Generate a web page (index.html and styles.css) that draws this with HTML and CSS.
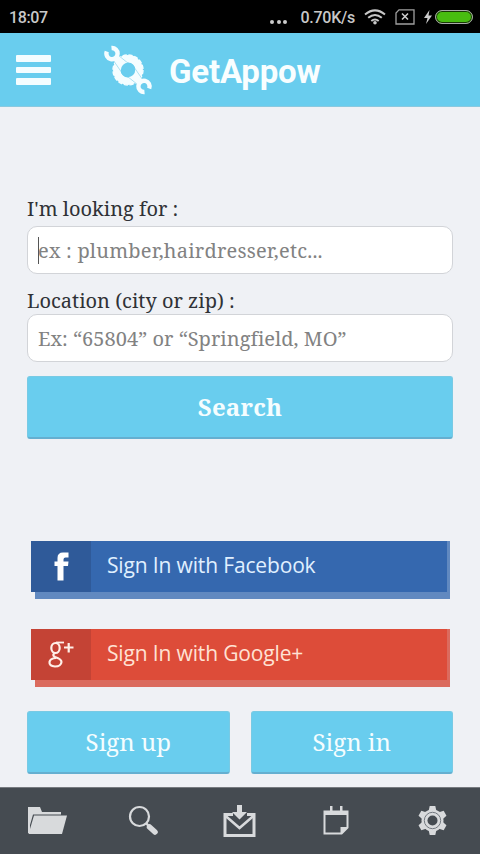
FILE: index.html
```html
<!DOCTYPE html>
<html lang="en">
<head>
<meta charset="utf-8">
<title>GetAppow</title>
<link rel="stylesheet" href="styles.css">
</head>
<body>
<div class="status">
  <span class="time">18:07</span>
  <span class="dots"><i></i><i></i><i></i></span>
  <span class="speed">0.70K/s</span>
  <svg class="wifi" width="22" height="16" viewBox="0 0 22 16" fill="none" stroke="#c8c8c8" stroke-width="2"><path d="M1 5.5Q11-2.8 21 5.5M4.2 8.8Q11 3.2 17.800 8.800M7.300 12Q11 9 14.700 12"/><circle cx="11" cy="13.800" r="1.800" fill="#c8c8c8" stroke="none"/></svg>
  <svg class="sim" width="20" height="16" viewBox="0 0 20 16" fill="none" stroke="#a0a0a0" stroke-width="1.300"><path d="M4 .8H19V15H1V4Z"/><path d="M7 4.500L13 10.500M13 4.500L7 10.500" stroke="#ccc" stroke-width="1.600"/></svg>
  <svg class="bolt" width="8" height="14" viewBox="0 0 8 14" fill="#ccc"><path d="M5.500 0L0 8H3.500L2 14L8 5.500H4.500Z"/></svg>
  <span class="battery"></span>
</div>
<header class="bar">
  <div class="menu"><i></i><i></i><i></i></div>
  <svg class="logo" width="50" height="50" viewBox="0 0 50 50">
    <g transform="translate(24 25)">
      <circle r="11.200" fill="none" stroke="#f5fdff" stroke-width="7.500"/>
      <circle r="15" fill="none" stroke="#f5fdff" stroke-width="1.400" stroke-dasharray="4.200 1.690"/>
    </g>
    <g id="wrench">
      <path d="M14.500 10.500L24.500 18.500L17 26.500L9.500 15.500Z" fill="#f5fdff" stroke="#9bd9ee" stroke-width=".8"/>
      <path d="M2.800 6.500A5.600 5.600 0 1 0 7.500 3" fill="none" stroke="#f5fdff" stroke-width="4.400"/>
    </g>
    <use href="#wrench" transform="rotate(180 24 25)"/>
    <circle cx="24" cy="25" r="7.200" fill="#69cdee"/>
  </svg>
  <h1>GetAppow</h1>
</header>
<main>
  <label class="l1">I'm looking for :</label>
  <div class="field"><b class="caret"></b><span class="p1">ex : plumber,hairdresser,etc...</span></div>
  <label class="l2">Location (city or zip) :</label>
  <div class="field"><span class="p2">Ex: “65804” or “Springfield, MO”</span></div>
  <div class="btn search"><span>Search</span></div>
  <div class="social fb"><div class="mark"><svg width="60" height="51" viewBox="0 0 60 51"><path d="M26.500 39.500V25H23.500V20.500H26.500V17Q26.500 11.500 32 11.500H37.500V16.500H34.500Q32.500 16.500 32.500 18.500V20.500H37.500L37 25H32.500V39.500Z" fill="#fff"/></svg></div><span>Sign In with Facebook</span></div>
  <div class="social gp"><div class="mark"><svg width="60" height="51" viewBox="0 0 60 51" fill="none" stroke="#fff0e8"><ellipse cx="24.500" cy="19" rx="4.200" ry="5" stroke-width="2.200"/><path d="M33 13.500H25" stroke-width="1.800"/><path d="M24 24Q20.500 26 24 28Q30.500 30 30.500 33Q30 37.500 24 37.500Q18 37 18.500 33Q19 29.500 25 29" stroke-width="2.200"/><path d="M33 18.500H42.500M37.700 14V23.500" stroke-width="2.200"/></svg></div><span>Sign In with Google+</span></div>
  <div class="pair"><div class="btn up"><span>Sign up</span></div><div class="btn in"><span>Sign in</span></div></div>
</main>
<nav>
  <svg width="40" height="34" viewBox="0 0 40 34" fill="#d8dadc"><path d="M1 29V3H13L15 8H34V10.500H6L3 21V29Z"/><path d="M7 11.500H40L35 30H1.500Z"/></svg>
  <svg width="40" height="34" viewBox="0 0 40 34" fill="none" stroke="#d8dadc"><circle cx="15.500" cy="12.500" r="9.500" stroke-width="2.200"/><path d="M22 19L26 23.500" stroke-width="2.500"/><path d="M25.500 23L31 28" stroke-width="5.500" stroke-linecap="round"/></svg>
  <svg width="40" height="34" viewBox="0 0 40 34" fill="none" stroke="#d8dadc"><path d="M13 10.500H5V31.500H34V10.500H27" stroke-width="3"/><path d="M4.500 11L19.500 24L34.500 11" stroke-width="2.500"/><path d="M17 1H22V8H27L19.500 15.500L12 8H17Z" fill="#d8dadc" stroke="none"/></svg>
  <svg width="40" height="34" viewBox="0 0 40 34" fill="#d8dadc"><path d="M6.500 6.500H13V2H15.500V6.500H23V2H25.500V6.500H31.500V24L25 30.500H6.500ZM8.500 11V28.500H23.500V23H29.500V11Z" fill-rule="evenodd"/></svg>
  <svg width="40" height="34" viewBox="0 0 40 34"><g transform="translate(19.500 16.500)"><g id="teeth" fill="#d8dadc"><path id="t" d="M-4-9L-2.800-14.500H2.800L4-9V9L2.800 14.500H-2.800L-4 9Z"/><use href="#t" transform="rotate(60)"/><use href="#t" transform="rotate(120)"/><circle r="11"/></g><circle r="8.200" fill="none" stroke="#737980" stroke-width="1"/><circle r="5" fill="#454b51"/></g></svg>
</nav>
</body>
</html>
```
FILE: styles.css
```css
* { box-sizing: border-box; }
body { margin: 0; width: 480px; height: 854px; overflow: hidden; display: flex; flex-direction: column; background: #eff1f5; font-family: "Noto Serif", "Droid Serif", "DejaVu Serif Condensed", "DejaVu Serif", serif; }
span, label, h1 { white-space: nowrap; }
.status { height: 33px; background: #000; color: #c8c8c8; display: flex; align-items: center; padding: 1px 7px 0 9px; font: 500 16px/32px Roboto, sans-serif; }
.time { letter-spacing: -0.4px; padding-top: 1px; }
.dots { display: flex; gap: 2.5px; margin: 9px 13px 0 auto; }
.dots i { width: 4px; height: 4px; border-radius: 50%; background: #ccc; }
.speed { margin-right: 9px; letter-spacing: -0.25px; padding-top: 1px; }
.sim { margin: 0 9px; }
.battery { width: 38px; height: 14px; margin-left: 3px; border: 1.5px solid #aaa; border-radius: 7px; background: #48bd10; box-shadow: inset 0 0 0 1px #183805; }
.bar { height: 74px; background: #69cdee; border-bottom: 1px solid #8ac9df; display: flex; align-items: center; padding-left: 16px; }
.menu { display: flex; flex-direction: column; gap: 5px; width: 35px; margin: 1px 53px 0 0; }
.menu i { height: 6.5px; border-radius: 1px; background: #f5fdff; }
h1 { margin: 4px 0 0 15px; color: #f8feff; font: bold 33px/40px Roboto, sans-serif; letter-spacing: -0.2px; }
main { height: 680px; padding: 89px 27px 0; display: flex; flex-direction: column; }
label { color: #303236; font-size: 20px; line-height: 26px; height: 30px; }
.l2 { margin-top: 14px; height: 26px; }
.field { height: 48px; flex: none; background: #fff; border: 1.5px solid #d2d4d8; border-radius: 10px; display: flex; align-items: center; padding-left: 10px; color: #828282; font-size: 20px; line-height: 28px; }
.p1 { letter-spacing: 0.2px; padding-top: 1px; }
.p2 { letter-spacing: 0.03px; padding-top: 1px; }
.caret { width: 1px; height: 27px; margin-right: -1px; background: #555; }
.btn { height: 63px; flex: none; border-radius: 3px; background: #69cdee; border: 1px solid #78cae4; border-bottom: 2px solid #65afd0; color: #f5fdff; display: flex; align-items: center; justify-content: center; font-size: 24px; line-height: 30px; }
.search { margin-top: 14px; font-weight: bold; letter-spacing: 0.2px; }
.social { height: 51px; flex: none; width: 419px; margin-left: 4px; display: flex; font: 21px/48px "Open Sans", sans-serif; letter-spacing: -0.15px; }
.mark { width: 60px; margin-right: 16px; }
.fb { margin-top: 102px; background: #3568af; color: #e0f0ff; border-right: 3px solid #6189c0; box-shadow: 4px 7px #6189c0; clip-path: inset(0 0 -7px 0); }
.fb .mark { background: #2f5a99; }
.gp { margin-top: 37px; background: #dd4c39; color: #ffe2d4; border-right: 3px solid #db6b5e; box-shadow: 4px 7px #db6b5e; clip-path: inset(0 0 -7px 0); }
.gp .mark { background: #c44335; }
.pair { display: grid; grid-template-columns: 1fr 1fr; gap: 21px; margin-top: 31px; }
nav { height: 67px; background: #454b51; border-top: 1px solid #777b80; display: flex; justify-content: space-between; padding: 16px 27px 0; }
```
